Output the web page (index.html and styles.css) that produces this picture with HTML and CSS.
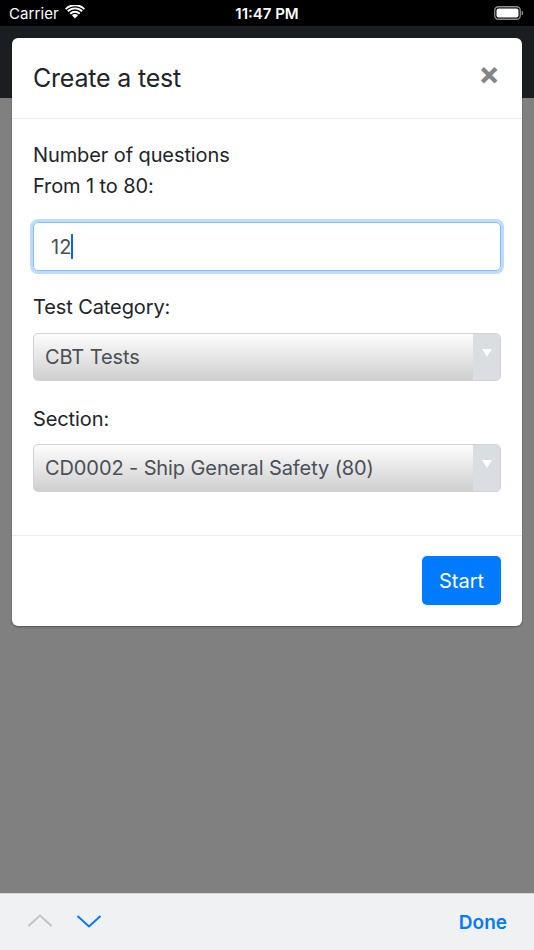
FILE: index.html
```html
<!DOCTYPE html>
<html>
<head>
<meta charset="utf-8">
<link rel="stylesheet" href="styles.css">
</head>
<body>
<div class="screen">
  <div class="statusbar">
    <div class="sb-left">
      <span class="carrier">Carrier</span>
      <svg class="wifi" width="20" height="14" viewBox="0 0 20 14">
        <path d="M10 13.5 L6.9 10.3 A4.4 4.4 0 0 1 13.1 10.3 Z" fill="#fff"/>
        <path d="M4.6 8 A7.7 7.7 0 0 1 15.4 8 L14 9.4 A5.8 5.8 0 0 0 6 9.4 Z" fill="#fff"/>
        <path d="M2.2 5.6 A11.1 11.1 0 0 1 17.8 5.6 L16.5 6.9 A9.2 9.2 0 0 0 3.5 6.9 Z" fill="#fff"/>
        <path d="M0 3.4 A14.2 14.2 0 0 1 20 3.4 L18.7 4.7 A12.4 12.4 0 0 0 1.3 4.7 Z" fill="#fff"/>
      </svg>
    </div>
    <div class="time">11:47 PM</div>
    <div class="sb-right">
      <svg width="30" height="14" viewBox="0 0 30 14">
        <rect x="0.75" y="0.75" width="25.5" height="12.5" rx="3.5" fill="none" stroke="#8e8e8e" stroke-width="1.3"/>
        <rect x="2.5" y="2.5" width="22" height="9" rx="2" fill="#fff"/>
        <path d="M27.6 4.8 a1.6 2.2 0 0 1 0 4.4 Z" fill="#8e8e8e"/>
      </svg>
    </div>
  </div>
  <div class="navband"></div>
  <div class="overlay">
    <div class="modal">
      <div class="modal-header">
        <h5 class="modal-title">Create a test</h5>
        <span class="close">&times;</span>
      </div>
      <div class="modal-body">
        <div class="group g1">
          <label class="lbl">Number of questions<br>From 1 to 80:</label>
          <div class="input"><span>12</span><span class="caret"></span></div>
        </div>
        <div class="group g2">
          <label class="lbl">Test Category:</label>
          <div class="select"><span class="sel-text">CBT Tests</span><span class="sel-arrow"><span class="tri"></span></span></div>
        </div>
        <div class="group g3">
          <label class="lbl">Section:</label>
          <div class="select"><span class="sel-text">CD0002 - Ship General Safety (80)</span><span class="sel-arrow"><span class="tri"></span></span></div>
        </div>
      </div>
      <div class="modal-footer">
        <button class="btn">Start</button>
      </div>
    </div>
  </div>
  <div class="toolbar">
    <div class="chevrons">
      <svg width="26" height="16" viewBox="0 0 26 16"><path d="M1.5 13 L13 2.5 L24.5 13" fill="none" stroke="#c4c4c6" stroke-width="2"/></svg>
      <svg width="26" height="16" viewBox="0 0 26 16"><path d="M1.5 3 L13 13.5 L24.5 3" fill="none" stroke="#007aff" stroke-width="2"/></svg>
    </div>
    <div class="done">Done</div>
  </div>
</div>
</body>
</html>
```
FILE: styles.css
```css
html, body { margin: 0; padding: 0; }
body { font-family: Inter, "Liberation Sans", sans-serif; background: #808080; }
.screen { width: 534px; height: 950px; display: flex; flex-direction: column; position: relative; overflow: hidden; }
.statusbar { height: 26px; background: #000; color: #fff; display: flex; align-items: center; justify-content: space-between; padding: 0 10px 0 9px; font-size: 15px; position: relative; }
.sb-left { display: flex; align-items: center; gap: 6px; width: 120px; }
.carrier { font-weight: 400; letter-spacing: 0.1px; }
.wifi { margin-top: -2px; }
.time { position: absolute; left: 0; right: 0; text-align: center; font-weight: 600; font-size: 15px; }
.sb-right { display: flex; align-items: center; }
.navband { height: 72px; background: #1b1e21; flex: none; }
.overlay { flex: 1; background: #808080; position: relative; }
.modal { position: absolute; left: 12px; top: -60px; width: 510px; background: #fff; border-radius: 6px; box-shadow: 0 1px 2px rgba(0,0,0,.35); }
.modal-header { height: 81px; box-sizing: border-box; border-bottom: 1px solid #e9ecef; display: flex; align-items: center; justify-content: space-between; padding: 0 21px; }
.modal-title { margin: 0; font-size: 25px; font-weight: 400; color: #212529; line-height: 36px; letter-spacing: -0.2px; }
.close { font-size: 32px; font-weight: 700; color: #858585; line-height: 1; margin-right: 1px; margin-top: -9px; }
.modal-body { padding: 21px 21px 43px; }
.group { display: flex; flex-direction: column; }
.lbl { font-size: 20px; line-height: 30.5px; color: #212529; letter-spacing: -0.1px; }
.g1 .lbl { margin-bottom: 21px; }
.g1 { margin-bottom: 21px; }
.g2 .lbl, .g3 .lbl { margin-bottom: 10px; }
.g2 { margin-bottom: 23px; }
.input { height: 49px; box-sizing: border-box; border: 1px solid #80bdff; border-radius: 5px; box-shadow: 0 0 0 3px #bfdcfd; display: flex; align-items: center; padding-left: 17px; font-size: 20px; color: #495057; }
.caret { display: inline-block; width: 2px; height: 25px; background: #1a5cff; margin-left: 0; }
.select { height: 48px; box-sizing: border-box; border: 1px solid #cfd2d6; border-radius: 5px; background: linear-gradient(#fdfdfd, #cfcfcf); display: flex; align-items: center; overflow: hidden; }
.sel-text { flex: 1; padding-left: 11px; font-size: 20px; color: #495057; white-space: nowrap; letter-spacing: -0.1px; }
.sel-arrow { width: 27px; align-self: stretch; background: #dadde1; display: flex; align-items: center; justify-content: center; }
.tri { width: 0; height: 0; border-left: 5px solid transparent; border-right: 5px solid transparent; border-top: 8px solid #fff; margin-top: -8px; }
.modal-footer { border-top: 1px solid #e9ecef; padding: 20px 21px 21px; display: flex; justify-content: flex-end; }
.btn { width: 79px; height: 49px; background: #007bff; color: #fff; border: none; border-radius: 5px; font-family: Inter, "Liberation Sans", sans-serif; font-size: 20px; padding: 0; }
.toolbar { height: 57px; flex: none; background: #f0f1f3; border-top: 1px solid #d6d7d9; box-sizing: border-box; display: flex; align-items: center; justify-content: space-between; padding: 0 27px 0 27px; }
.chevrons { display: flex; gap: 23px; margin-top: -2px; }
.done { color: #007aff; font-weight: 600; font-size: 19px; margin-right: 0; }
```
